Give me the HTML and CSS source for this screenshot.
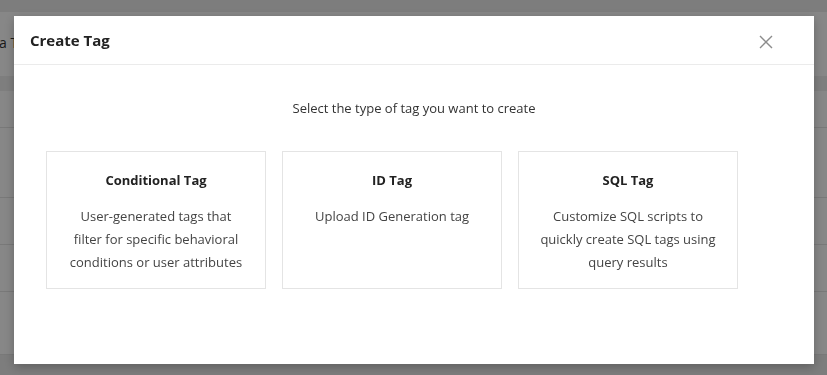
FILE: index.html
```html
<!DOCTYPE html>
<html lang="en">
<head>
  <meta charset="UTF-8">
  <title>Create Tag</title>
  <link rel="stylesheet" href="styles.css">
</head>
<body>
  <div class="page">
    <div class="topbar"></div>
    <div class="page-title">a T</div>
    <div class="table-head"></div>
    <div class="row row-a"></div>
    <div class="row row-b"></div>
    <div class="row row-c"></div>
    <div class="row row-c"></div>
    <div class="row row-d"></div>
    <div class="footer"></div>
  </div>

  <div class="mask"></div>

  <div class="modal">
    <div class="modal-header">
      <span class="modal-title">Create Tag</span>
      <span class="close">
        <svg width="14" height="14" viewBox="0 0 14 14">
          <path d="M1 1 L13 13 M13 1 L1 13" stroke="#8c8c8c" stroke-width="1.4" fill="none"/>
        </svg>
      </span>
    </div>
    <div class="modal-body">
      <p class="hint">Select the type of tag you want to create</p>
      <div class="cards">
        <div class="card">
          <div class="card-title">Conditional Tag</div>
          <div class="card-desc">User-generated tags that filter for specific behavioral conditions or user attributes</div>
        </div>
        <div class="card">
          <div class="card-title">ID Tag</div>
          <div class="card-desc">Upload ID Generation tag</div>
        </div>
        <div class="card">
          <div class="card-title">SQL Tag</div>
          <div class="card-desc">Customize SQL scripts to quickly create SQL tags using query results</div>
        </div>
      </div>
    </div>
  </div>
</body>
</html>
```

FILE: styles.css
```css
body {
  margin: 0;
  font-family: "Open Sans", "Noto Sans", sans-serif;
  color: #333;
  background: #fff;
  overflow: hidden;
}
.page {
  height: 375px;
}
.topbar {
  height: 12px;
  background: #ececec;
}
.page-title {
  height: 64px;
  line-height: 62px;
  font-size: 14px;
  color: #333;
  margin-left: -1px;
}
.table-head {
  height: 15px;
  background: #efefef;
}
.row {
  border-bottom: 1px solid #e4e4e4;
}
.row-a { height: 36px; }
.row-b { height: 69px; }
.row-c { height: 46px; }
.row-d { height: 62px; }
.footer {
  height: 30px;
  background: #ececec;
}
.mask {
  position: fixed;
  inset: 0;
  background: rgba(0, 0, 0, 0.47);
}
.modal {
  position: fixed;
  left: 14px;
  top: 16px;
  width: 800px;
  height: 348px;
  background: #fff;
  box-shadow: 0 3px 10px rgba(0, 0, 0, 0.25);
}
.modal-header {
  height: 48px;
  border-bottom: 1px solid #ebebeb;
  display: flex;
  align-items: center;
  justify-content: space-between;
  padding: 0 41px 0 16px;
}
.modal-title {
  font-size: 15px;
  font-weight: 700;
  color: #222;
  margin-top: -1px;
}
.close {
  display: flex;
  margin-top: 4px;
}
.modal-body {
  padding: 0 32px;
}
.hint {
  margin: 0;
  padding-top: 33px;
  height: 53px;
  text-align: center;
  font-size: 13px;
  line-height: 20px;
  color: #333;
}
.cards {
  display: flex;
  gap: 16px;
}
.card {
  width: 220px;
  height: 138px;
  box-sizing: border-box;
  border: 1px solid #e4e4e4;
  padding: 18px 18px 0;
  text-align: center;
}
.card-title {
  font-size: 13px;
  font-weight: 700;
  color: #222;
  line-height: 20px;
  margin-bottom: 15px;
}
.card-desc {
  font-size: 13px;
  line-height: 23px;
  color: #444;
}
```
